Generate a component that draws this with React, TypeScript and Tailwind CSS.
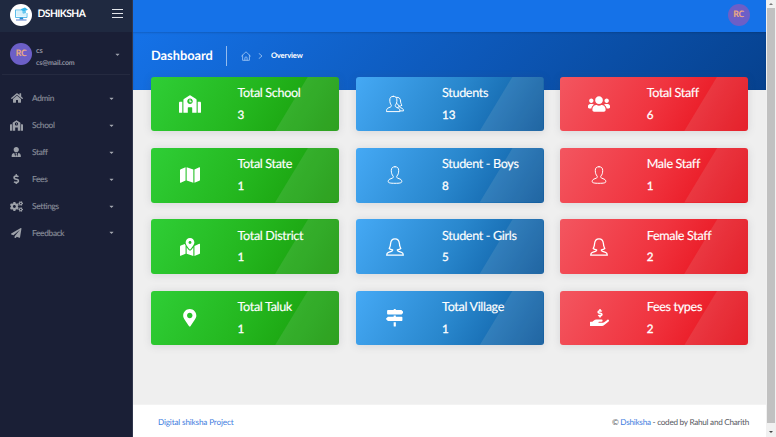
import type { ReactNode } from "react";
import {
  FaHome, FaSchool, FaUserTie, FaDollarSign, FaCogs, FaPaperPlane, FaMap, FaMapMarkedAlt,
  FaMapMarkerAlt, FaUsers, FaMapSigns, FaHandHoldingUsd, FaCaretDown,
} from "react-icons/fa";

const strokeProps = { fill: "none", stroke: "currentColor", strokeLinejoin: "round", strokeLinecap: "round" } as const;

function Man() {
  return (
    <svg width="18" height="18" viewBox="0 0 18 18" {...strokeProps} strokeWidth="1">
      <path d="M9 .7C6.400 .7 5.300 2.100 5.300 4.400C5.300 7 5.900 8.900 7.100 10C7.600 10.900 7.300 11.800 6.200 12.200L3.900 13.100C2.500 13.700 2.200 14.700 2.200 15.700C2.200 16.900 4.400 17.300 9 17.300S15.800 16.900 15.800 15.700C15.800 14.700 15.500 13.700 14.100 13.100L11.800 12.200C10.700 11.800 10.400 10.900 10.900 10C12.100 8.900 12.700 7 12.700 4.400C12.700 2.100 11.600 .7 9 .7Z" />
    </svg>
  );
}

function Woman() {
  return (
    <svg width="18" height="18" viewBox="0 0 18 18" {...strokeProps} strokeWidth="1.3">
      <path d="M9 .8C6.300 .8 4.900 2.600 4.600 5.500C4.500 7.600 4.100 9.100 3.200 10.600C4 11.300 5.200 11.700 6.700 11.900C6.900 12.700 6.200 13 5.400 13.300L2.400 14.300C1.100 14.700.7 15.600.7 17.200H17.300C17.300 15.600 16.900 14.700 15.600 14.300L12.600 13.300C11.800 13 11.100 12.700 11.300 11.900C12.800 11.700 14 11.300 14.800 10.600C13.900 9.100 13.500 7.600 13.400 5.500C13.100 2.600 11.700 .8 9 .8Z" />
    </svg>
  );
}

function Pair() {
  return (
    <svg width="18" height="18" viewBox="0 0 18 18" {...strokeProps} strokeWidth="1">
      <path d="M7.300 1.300C4.800 1.300 3.800 2.700 3.800 5C3.800 7.400 4.300 9 5.200 10C5.600 10.900 5.300 11.600 4.500 12L2.100 13C.9 13.600.5 14.600.5 16.600H13.900C13.900 14.600 13.500 13.600 12.300 13L10 12C9.200 11.600 9 10.900 9.400 10C10.400 9 10.900 7.400 10.900 5C10.900 2.700 9.800 1.300 7.300 1.300Z" />
      <path d="M10.500 2.300C13.200 1.900 14.400 3.700 14.500 6C14.600 7.800 15 9 16 10.200C15.200 11 14.300 11.200 13.300 11.200C13.200 12 13.700 12.300 14.400 12.600L16.200 13.400C17.200 13.900 17.400 14.700 17.500 15.900H14" />
      <path d="M11 8.500L13.300 11.200L11.800 12.600" />
    </svg>
  );
}

const nav = [
  { label: "Admin", icon: <FaHome size={12} /> },
  { label: "School", icon: <FaSchool size={13} /> },
  { label: "Staff", icon: <FaUserTie size={10.500} /> },
  { label: "Fees", icon: <FaDollarSign size={10.500} /> },
  { label: "Settings", icon: <FaCogs size={13} /> },
  { label: "Feedback", icon: <FaPaperPlane size={10.500} /> },
];

const green = "from-[#2fce36] via-[#24b71f] via-50% to-[#169806]";
const blue = "from-[#45a9f5] via-[#2987cd] via-50% to-[#07559a]";
const red = "from-[#f35660] via-[#f0343f] via-50% to-[#e60712]";

type CardData = { title: string; value: number; icon: ReactNode; tone: string };

const cards: CardData[] = [
  { title: "Total School", value: 3, icon: <FaSchool size={22} />, tone: green },
  { title: "Students", value: 13, icon: <Pair />, tone: blue },
  { title: "Total Staff", value: 6, icon: <FaUsers size={22} />, tone: red },
  { title: "Total State", value: 1, icon: <FaMap size={20} />, tone: green },
  { title: "Student - Boys", value: 8, icon: <Man />, tone: blue },
  { title: "Male Staff", value: 1, icon: <Man />, tone: red },
  { title: "Total District", value: 1, icon: <FaMapMarkedAlt size={20} />, tone: green },
  { title: "Student - Girls", value: 5, icon: <Woman />, tone: blue },
  { title: "Female Staff", value: 2, icon: <Woman />, tone: red },
  { title: "Total Taluk", value: 1, icon: <FaMapMarkerAlt size={17.500} />, tone: green },
  { title: "Total Village", value: 1, icon: <FaMapSigns size={17.500} />, tone: blue },
  { title: "Fees types", value: 2, icon: <FaHandHoldingUsd size={19} />, tone: red },
];

function StatCard({ title, value, icon, tone }: CardData) {
  return (
    <div className={`relative flex h-[54.7px] overflow-hidden rounded-[3px] bg-linear-[120deg] text-white ${tone}`}>
      <div className="absolute inset-0 bg-[#dddddd]/12 [clip-path:polygon(157px_0,100%_0,100%_100%,124px_100%)]" />
      <div className="relative flex w-[78px] shrink-0 items-center justify-center">{icon}</div>
      <div className="relative pt-[7.5px] pl-[8.5px] whitespace-nowrap">
        <div className="text-[12.6px] leading-[17px] tracking-[-0.34px] [-webkit-text-stroke:0.15px_white]">{title}</div>
        <div className="mt-[6.5px] text-[11.6px] leading-[15px] [-webkit-text-stroke:0.3px_white]">{value}</div>
      </div>
    </div>
  );
}

function Avatar() {
  return (
    <div className="flex size-[22px] shrink-0 items-center justify-center rounded-full bg-[#6c5fc7] font-['Noto_Sans',sans-serif] text-[8.8px] font-medium tracking-[-0.2px] text-[#f0ae80] [-webkit-text-stroke:0.2px_#f0ae80]">RC</div>
  );
}

function Logo() {
  return (
    <svg className="size-[22px] shrink-0" viewBox="0 0 22 22">
      <circle cx="11" cy="11" r="11" fill="#fff" />
      <path d="M5.200 6H13M5.500 6V13.500H17V9" fill="none" stroke="#4ab5e8" strokeWidth=".9" />
      <path d="M6.300 7H14L16 9.200V12.600H6.300Z" fill="#d6f1fb" />
      <path d="M10.500 5.300L15 3.500L18 5.800L13.500 7.600Z" fill="#35b7ec" />
      <path d="M12 7.500L15.800 6.800L16 9L13 9.700Z" fill="#66c7ef" />
      <path d="M10 13.500H12.800L13.500 15.500H9.300Z" fill="#258bd2" />
      <path d="M6 16H16.500" stroke="#6688cf" strokeWidth="1.100" />
    </svg>
  );
}

export default function App() {
  return (
    <div className="flex h-[437px] w-[776px] overflow-hidden bg-[#efefef] font-[Lato,sans-serif] [text-rendering:geometricPrecision]">
      <aside className="flex w-[133px] shrink-0 flex-col border-r border-[#30364d] bg-[#1a1f36]">
        <div className="flex h-8 shrink-0 items-center bg-[#1f2940] pr-[9px] pl-[10px]">
          <div className="-mt-[3px]"><Logo /></div>
          <span className="-mt-[2.5px] ml-[5.5px] text-[10.3px] font-bold tracking-[-0.55px] text-white">DSHIKSHA</span>
          <div className="-mt-[6px] ml-auto flex w-[11px] flex-col gap-[3px]">
            <i className="h-px bg-[#e3e5ea]" />
            <i className="h-px bg-[#e3e5ea]" />
            <i className="h-px bg-[#e3e5ea]" />
          </div>
        </div>
        <div className="mx-[2px] flex h-[43px] shrink-0 items-center border-b border-[#252a40] pt-[2px] pl-2">
          <Avatar />
          <div className="mt-[5px] ml-[4px] text-[7px] leading-[13px] font-bold tracking-[-0.15px] text-[#9092a0]">
            <div className="text-[7.500px]">cs</div>
            <div>cs@mail.com</div>
          </div>
          <FaCaretDown size={7} className="mr-[9px] ml-auto text-[#9b9eaa]" />
        </div>
        <nav className="flex flex-col pt-[10px] text-[#868b97]">
          {nav.map((item) => (
            <div key={item.label} className="flex h-[26.9px] items-center pr-[17px]">
              <div className="flex w-[33px] shrink-0 justify-center text-[#9da1a9]">{item.icon}</div>
              <span className="-ml-[1px] text-[8.3px] tracking-[-0.3px] [-webkit-text-stroke:0.15px_#868b97]">{item.label}</span>
              <FaCaretDown size={7} className="ml-auto text-[#a5a8b1]" />
            </div>
          ))}
        </nav>
      </aside>

      <div className="flex w-[633px] shrink-0 flex-col">
        <header className="flex h-8 shrink-0 items-center justify-end bg-[#1572e8] pr-[16.5px]">
          <div className="-mt-[2px]"><Avatar /></div>
        </header>
        <div className="h-[57.500px] shrink-0 bg-linear-[135deg] from-[#1572e8] to-[#06418e] shadow-[inset_0_1px_2px_rgba(0,0,0,0.15)]">
          <div className="flex h-[47px] items-center pl-[18px] text-white">
            <h1 className="mt-[1px] text-[12.8px] font-bold">Dashboard</h1>
            <div className="ml-[13.500px] h-[20px] w-px bg-white/55" />
            <svg className="ml-[14px] size-[10px] text-[#a6caf6]" viewBox="0 0 10 10" {...strokeProps} strokeWidth=".8">
              <path d="M.6 5L5 .8L9.400 5M1.600 4.200V9.300H8.400V4.200M3.900 9.200V6.500Q5 5.300 6.100 6.500V9.200" />
            </svg>
            <svg className="ml-[7px] h-[6px] w-[5px] text-[#a6caf6]" viewBox="0 0 5 6" {...strokeProps} strokeWidth=".8">
              <path d="M1 .5L4 3L1 5.500" />
            </svg>
            <span className="mt-[1px] ml-[7.500px] text-[7.600px] font-bold tracking-[-0.15px]">Overview</span>
          </div>
        </div>
        <main className="relative z-10 -mt-[13px] grid shrink-0 grid-cols-[188px_188px_188px] gap-x-[16.600px] gap-y-[16.700px] pl-[18px]">
          {cards.map((card) => (
            <div key={card.title} className="rounded-[3px] shadow-[0_1px_8px_rgba(69,65,78,0.15)]">
              <StatCard {...card} />
            </div>
          ))}
        </main>
        <footer className="mt-auto flex h-[33px] shrink-0 items-center justify-between border-t border-[#f3f3f3] bg-white pt-[3px] pr-[17px] pl-[25px] text-[8.200px] text-[#575962]">
          <span className="tracking-[-0.17px] text-[#3f7ee0]">Digital shiksha Project</span>
          <span className="tracking-[-0.27px]">© <span className="text-[#3f7ee0]">Dshiksha</span> - coded by Rahul and Charith</span>
        </footer>
      </div>

      <div className="flex w-[10px] shrink-0 flex-col items-center justify-between bg-[#f1f1f1]">
        <div className="flex h-2 items-center"><i className="border-x-[2px] border-b-[2px] border-x-transparent border-b-[#777]" /></div>
        <div className="w-[8px] grow bg-[#c1c1c1]" />
        <div className="flex h-[14px] items-center"><i className="mt-[3px] border-x-[2px] border-t-[2px] border-x-transparent border-t-[#444]" /></div>
      </div>
    </div>
  );
}
